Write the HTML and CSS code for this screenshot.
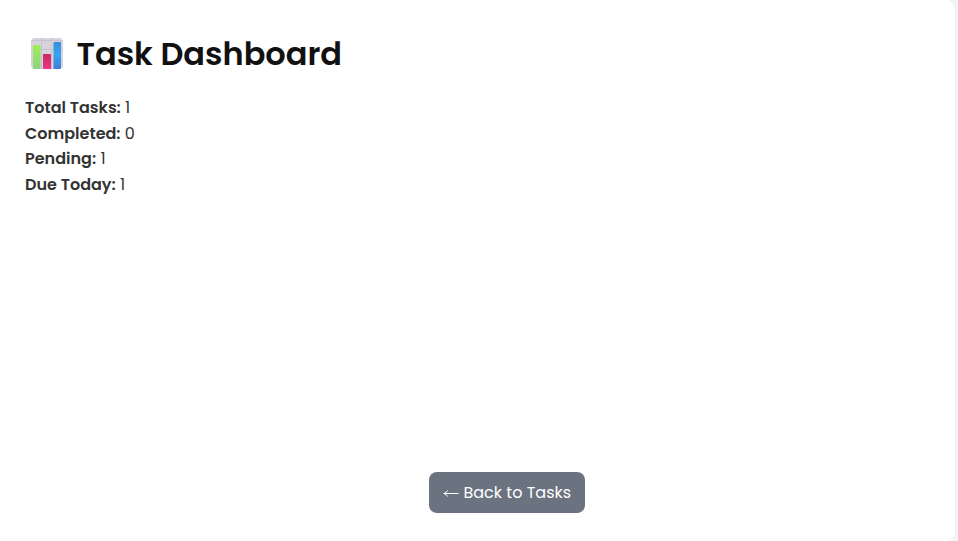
FILE: index.html
```
<!DOCTYPE html>
<html lang="en">
<head>
<meta charset="utf-8">
<title>Task Dashboard</title>
<link rel="stylesheet" href="styles.css">
</head>
<body>
<main class="card">
  <h1 class="title">
    <svg class="chart" viewBox="0 0 32 31" aria-hidden="true">
      <defs>
        <linearGradient id="green" x1="0" y1="0" x2="0" y2="1"><stop offset="0" stop-color="#9bf04e"/><stop offset="1" stop-color="#8fd282"/></linearGradient>
        <linearGradient id="pink" x1="0" y1="0" x2="0" y2="1"><stop offset="0" stop-color="#c92a62"/><stop offset="1" stop-color="#ee3588"/></linearGradient>
        <linearGradient id="blue" x1="0" y1="0" x2="0" y2="1"><stop offset="0" stop-color="#2f8fd8"/><stop offset=".45" stop-color="#38a4ef"/><stop offset="1" stop-color="#3f7fd3"/></linearGradient>
        <clipPath id="tile"><rect width="32" height="31" rx="4"/></clipPath>
      </defs>
      <g clip-path="url(#tile)">
        <rect width="32" height="31" fill="#d8d2de"/>
        <path d="M0 2.500H32M0 11.500H32M0 21.500H32M10.500 0V32M20.500 0V32" stroke="#c8c1d0" fill="none"/>
        <path d="M2 31V8q0-1 1-1h5.500q1 0 1 1V31z" fill="url(#green)"/>
        <path d="M12 31V17q0-1 1-1h6q1 0 1 1V31z" fill="url(#pink)"/>
        <path d="M22.500 31V5q0-1 1-1H29q1 0 1 1V31z" fill="url(#blue)"/>
      </g>
    </svg>
    <span class="title-text">Task Dashboard</span>
  </h1>
  <div class="stats">
    <div><strong>Total Tasks:</strong> 1</div>
    <div><strong>Completed:</strong> 0</div>
    <div><strong>Pending:</strong> 1</div>
    <div><strong>Due Today:</strong> 1</div>
  </div>
  <a class="back" href="#">
    <svg class="arrow" viewBox="0 0 16 10" aria-hidden="true"><path d="M15.500 5.500H1M4.500 2.500Q3.500 5 .8 5.500Q3.500 6 4.500 8.500"/></svg>
    <span>Back to Tasks</span>
  </a>
</main>
</body>
</html>
```
FILE: styles.css
```
* { box-sizing: border-box; }
body {
  margin: 0;
  height: 541px;
  overflow: hidden;
  background: #f5f5f5;
  color: #333;
  font: 16px/25.6px Poppins, Inter, sans-serif;
}
.card {
  display: flex;
  flex-direction: column;
  width: 963px;
  height: 544px;
  margin: -1px 0 0 -8px;
  padding: 31px 33px 30px;
  background: #fff;
  border-radius: 12px;
  box-shadow: 0 0 6px rgba(0, 0, 0, .03);
}
.title {
  display: flex;
  align-items: flex-start;
  height: 48px;
  margin: 0 0 17px 6px;
  color: #111;
  font-size: 32px;
  line-height: 48px;
  font-weight: 600;
}
.chart { width: 32px; height: 31px; margin: 8px 13.5px 0 0; }
.title-text { white-space: nowrap; }
.stats strong { font-weight: 600; }
.back {
  display: flex;
  align-items: center;
  align-self: flex-start;
  width: 156px;
  height: 41px;
  margin: auto 0 0 404px;
  padding-left: 14px;
  gap: 4.5px;
  border-radius: 8px;
  background: #6b7280;
  color: #fff;
  text-decoration: none;
  white-space: nowrap;
}
.arrow { width: 16px; height: 10px; fill: none; stroke: #fff; stroke-width: 1; }
```
